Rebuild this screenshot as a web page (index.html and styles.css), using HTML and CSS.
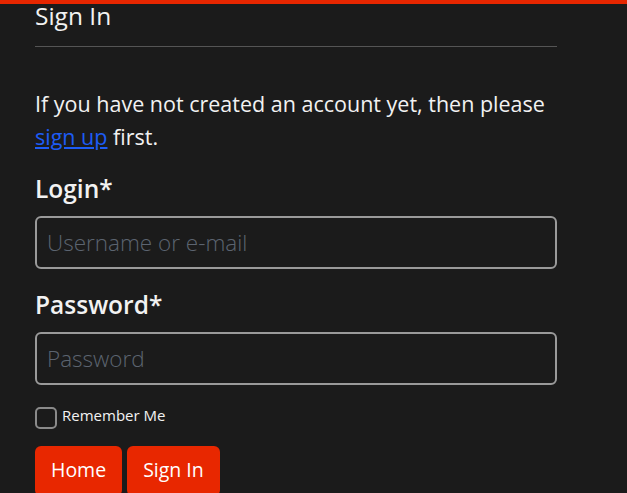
FILE: index.html
```html
<!DOCTYPE html>
<html lang="en">
<head>
<meta charset="utf-8">
<title>Sign In</title>
<link rel="stylesheet" href="styles.css">
</head>
<body>
<div class="topbar"></div>
<main class="page">
  <h1 class="title">Sign In</h1>
  <hr class="rule">
  <p class="intro">If you have not created an account yet, then please <a href="#" class="link">sign up</a> first.</p>
  <form class="form">
    <label class="label" for="login">Login*</label>
    <input class="field" id="login" type="text" placeholder="Username or e-mail">
    <label class="label label-next" for="password">Password*</label>
    <input class="field" id="password" type="password" placeholder="Password">
    <label class="remember"><span class="check"></span><span class="remember-text">Remember Me</span></label>
    <div class="actions">
      <button type="button" class="btn">Home</button>
      <button type="submit" class="btn">Sign In</button>
    </div>
  </form>
</main>
</body>
</html>
```
FILE: styles.css
```css
* { box-sizing: border-box; }
html, body { margin: 0; padding: 0; height: 100%; overflow: hidden; }
body {
  background: #1b1b1b;
  color: #f2f2f2;
  font-family: "Open Sans", "Liberation Sans", sans-serif;
}
.topbar { height: 4px; background: #e62600; }
.page { width: 522px; margin-left: 35px; }
.title {
  margin: -8px 0 0;
  font-size: 24.5px;
  font-weight: 500;
  line-height: 40px;
}
.rule {
  margin: 10px 0 0;
  border: 0;
  border-top: 1px solid #555;
  height: 0;
}
.intro {
  margin: 0;
  padding-top: 40px;
  font-size: 21.5px;
  line-height: 33px;
}
.link { color: #1d5cf5; }
.form { display: flex; flex-direction: column; align-items: flex-start; }
.label {
  font-size: 24.5px;
  font-weight: 600;
  line-height: 36px;
  margin-top: 18px;
}
.label-next { margin-top: 18px; }
.field {
  width: 100%;
  height: 53px;
  margin-top: 9px;
  background: transparent;
  border: 2px solid #9a9a9a;
  border-radius: 6px;
  padding: 0 10px;
  font-family: inherit;
  font-size: 22.5px;
  font-weight: 300;
  color: #eee;
}
.field::placeholder { color: #5c6470; }
.remember { display: flex; align-items: flex-start; gap: 5px; margin-top: 20px; }
.check {
  width: 22px; height: 22px;
  border: 2px solid #8a8a8a;
  border-radius: 5px;
  margin-top: 2px;
}
.remember-text { font-size: 15px; line-height: 20px; }
.actions { display: flex; gap: 5px; margin-top: 17px; }
.btn {
  background: #e82700;
  color: #fff;
  border: 0;
  border-radius: 6px;
  font-family: inherit;
  font-size: 19.5px;
  line-height: 28px;
  padding: 10px 16px 12px;
}
```
